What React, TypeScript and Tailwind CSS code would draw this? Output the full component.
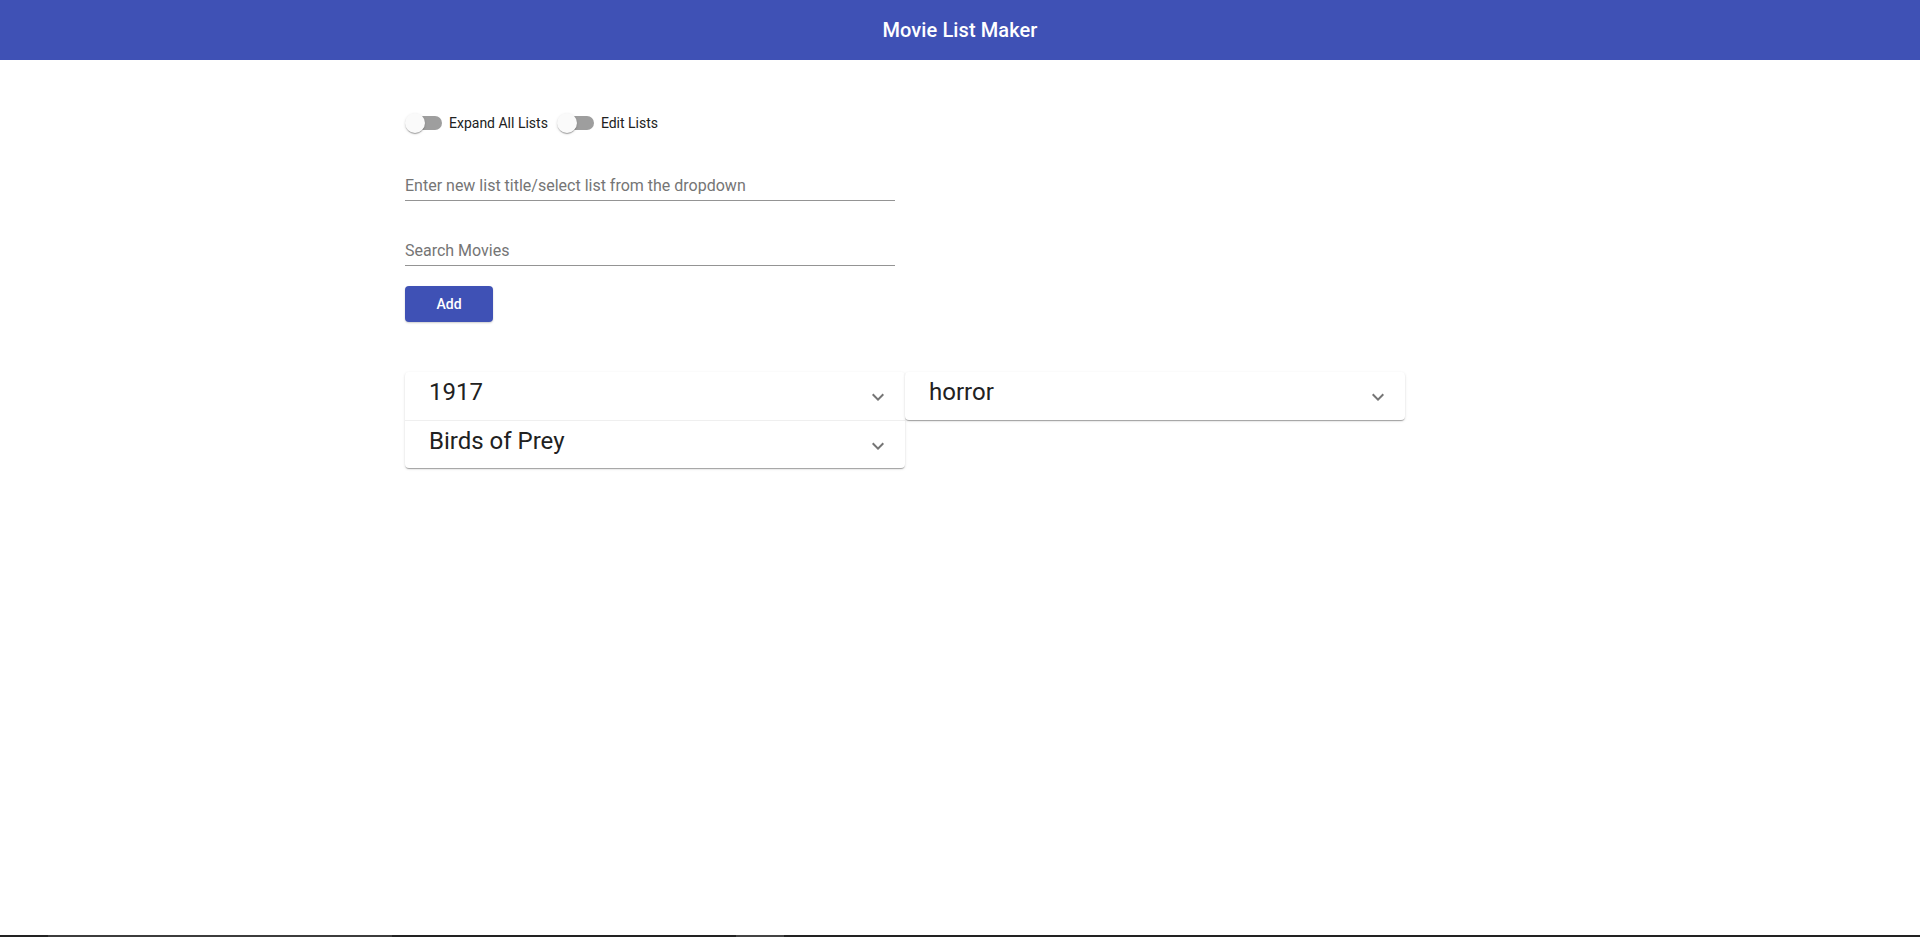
import { useState } from "react";

const lists = [
  { col: 0, items: ["1917", "Birds of Prey"] },
  { col: 1, items: ["horror"] },
];

function Toggle({ label, checked, onChange }: { label: string; checked: boolean; onChange: () => void }) {
  return (
    <button type="button" onClick={onChange} className="flex items-center h-[38px] cursor-pointer">
      <span className="relative w-[37px] h-[20px] flex items-center">
        <span className="ml-[3px] w-[34px] h-[14px] rounded-full bg-[#9e9e9e]" />
        <span
          className={`absolute top-0 w-[20px] h-[20px] rounded-full bg-[#fafafa] shadow-[0_2px_1px_-1px_rgba(0,0,0,0.2),0_1px_1px_0_rgba(0,0,0,0.14),0_1px_3px_0_rgba(0,0,0,0.12)] ${
            checked ? "left-[17px]" : "left-0"
          }`}
        />
      </span>
      <span className="ml-[7px] text-[14px] text-[#212121]">{label}</span>
    </button>
  );
}

function Chevron() {
  return (
    <svg viewBox="0 0 24 24" className="w-6 h-6 fill-[#757575]">
      <path d="M16.59 8.59L12 13.17 7.41 8.59 6 10l6 6 6-6z" />
    </svg>
  );
}

export default function App() {
  const [expandAll, setExpandAll] = useState(false);
  const [editLists, setEditLists] = useState(false);

  return (
    <div className="min-h-screen flex flex-col bg-white font-['Roboto',_'Liberation_Sans',_sans-serif]">
      <header className="h-[60px] bg-[#3f51b5] flex items-center justify-center">
        <h1 className="text-[20px] font-medium text-white tracking-[0.1px]">Movie List Maker</h1>
      </header>

      <main className="ml-[405px] w-[1000px] pt-[44px]">
        <div className="flex items-center gap-[9px]">
          <Toggle label="Expand All Lists" checked={expandAll} onChange={() => setExpandAll(!expandAll)} />
          <Toggle label="Edit Lists" checked={editLists} onChange={() => setEditLists(!editLists)} />
        </div>

        <div className="mt-[27px] w-[490px] border-b border-[#949494]">
          <input
            placeholder="Enter new list title/select list from the dropdown"
            className="w-full h-[31px] pt-[7px] pb-[6px] text-[16px] text-[#212121] placeholder:text-[#757575] outline-none bg-transparent"
          />
        </div>

        <div className="mt-[33px] w-[490px] border-b border-[#949494]">
          <input
            placeholder="Search Movies"
            className="w-full h-[31px] pt-[7px] pb-[6px] text-[16px] text-[#212121] placeholder:text-[#757575] outline-none bg-transparent"
          />
        </div>

        <button
          type="button"
          className="mt-[20px] w-[88px] h-[36px] rounded-[4px] bg-[#3f51b5] text-white text-[14px] font-medium shadow-[0_1px_2px_rgba(0,0,0,0.2)]"
        >
          Add
        </button>

        <div className="mt-[50px] grid grid-cols-[500px_500px] items-start">
          {lists.map((group) => (
            <div
              key={group.col}
              className="rounded-[4px] bg-white shadow-[0_2px_1px_-1px_rgba(0,0,0,0.2),0_1px_1px_0_rgba(0,0,0,0.14),0_1px_3px_0_rgba(0,0,0,0.12)]"
            >
              {group.items.map((title, i) => (
                <div
                  key={title}
                  className={`h-[48px] flex items-center pl-[24px] pr-[15px] ${i > 0 ? "border-t border-[#efefef]" : ""}`}
                >
                  <span className="flex-1 self-start pt-[4px] text-[24px] leading-[32px] text-[#212121]">{title}</span>
                  <span className="mt-[2px]">
                    <Chevron />
                  </span>
                </div>
              ))}
            </div>
          ))}
        </div>
      </main>

      <div className="mt-auto h-[2px] flex bg-[#222222]">
        <div className="ml-[48px] w-[344px] bg-[#3c3c3c]" />
        <div className="ml-[344px] w-[48px] bg-[#444444]" />
      </div>
    </div>
  );
}
